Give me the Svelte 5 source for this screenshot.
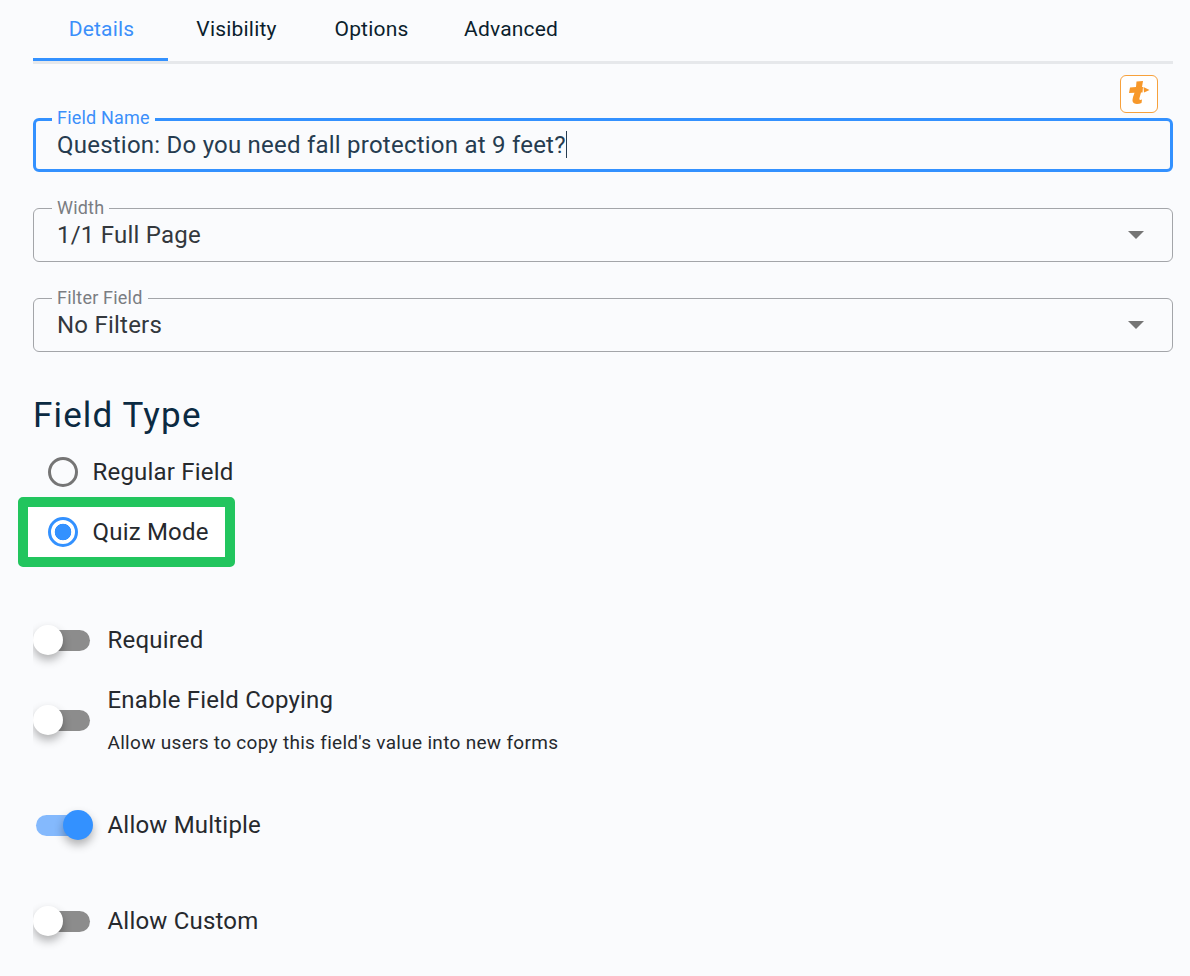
<script>
	const tabs = ['Details', 'Visibility', 'Options', 'Advanced'];
</script>

<div class="page">
	<nav class="tabs">
		{#each tabs as tab, i}
			<div class="tab" class:active={i === 0}>{tab}</div>
		{/each}
	</nav>

	<div class="logo-row">
		<div class="logo">
			<svg viewBox="1 1 36 36" width="36" height="36">
				<path d="M10 12.5 L16 12 L16.5 6.5 L23 6 L22 12 L23 12 L22.5 17.5 L21 17.5 L19.5 23 C19 25 20 25.5 22 24.5 L21.5 28 C18 29.5 13 29.5 12.5 26 C12.3 24 13.5 20.5 14.5 17.8 L9 18 Z" fill="#f7982a" />
				<path d="M23.5 12 L29.5 15 L24 17.5 Z" fill="#f7982a" />
			</svg>
		</div>
	</div>

	<fieldset class="field focused">
		<legend>Field Name</legend>
		<div class="value">Question: Do you need fall protection at 9 feet?<span class="caret"></span></div>
	</fieldset>

	<fieldset class="field">
		<legend>Width</legend>
		<div class="value">1/1 Full Page</div>
		<span class="arrow"></span>
	</fieldset>

	<fieldset class="field">
		<legend>Filter Field</legend>
		<div class="value">No Filters</div>
		<span class="arrow"></span>
	</fieldset>

	<h2>Field Type</h2>

	<div class="radio">
		<span class="dot"></span>
		<span>Regular Field</span>
	</div>
	<div class="highlight">
		<div class="radio">
			<span class="dot on"></span>
			<span>Quiz Mode</span>
		</div>
	</div>

	<div class="switch-row required">
		<span class="switch"><span class="track"></span><span class="thumb"></span></span>
		<span class="label">Required</span>
	</div>

	<div class="switch-row copying">
		<span class="switch"><span class="track"></span><span class="thumb"></span></span>
		<div class="copy-text">
			<div class="label">Enable Field Copying</div>
			<div class="caption">Allow users to copy this field's value into new forms</div>
		</div>
	</div>

	<div class="switch-row multiple">
		<span class="switch on"><span class="track"></span><span class="thumb"></span></span>
		<span class="label">Allow Multiple</span>
	</div>

	<div class="switch-row custom">
		<span class="switch"><span class="track"></span><span class="thumb"></span></span>
		<span class="label">Allow Custom</span>
	</div>
</div>

<style>
	:global(body) {
		background: #fafbfd;
	}

	.page {
		height: 976px;
		box-sizing: border-box;
		padding: 0 17px 0 33px;
		overflow: hidden;
		font-family: Roboto, "Liberation Sans", sans-serif;
		color: #26292d;
	}

	.tabs {
		display: flex;
		height: 64px;
		box-sizing: border-box;
		border-bottom: 3px solid #e6e8eb;
	}

	.tab {
		min-width: 135px;
		height: 61px;
		box-sizing: border-box;
		padding: 15px 24px 0;
		border-bottom: 3px solid transparent;
		text-align: center;
		text-indent: 2px;
		font-size: 21px;
		line-height: 28px;
		letter-spacing: 0.2px;
		color: #0b1e2d;
	}

	.tab.active {
		color: #3b8ffa;
		border-bottom-color: #3391ff;
	}

	.logo-row {
		display: flex;
		justify-content: flex-end;
		height: 38px;
		margin: 11px 15px 0 0;
	}

	.logo {
		width: 38px;
		height: 38px;
		box-sizing: border-box;
		border: 1px solid #f7a13c;
		border-radius: 6px;
		background: #fff;
	}

	.logo svg {
		display: block;
	}

	.field {
		position: relative;
		margin: 0 0 28px;
		padding: 0 23px;
		height: 62px;
		box-sizing: border-box;
		border: 1px solid #a3a5a9;
		border-radius: 6px;
		min-width: 0;
	}

	.field legend {
		padding: 0 5px 2px;
		margin-left: -5px;
		font-size: 18px;
		line-height: 15px;
		letter-spacing: 0.2px;
		color: #7a7d82;
	}

	.value {
		font-size: 24px;
		line-height: 32px;
		letter-spacing: 0.23px;
		color: #33383d;
		margin-top: 2px;
	}

	.field.focused {
		margin-top: -3px;
		border: 3px solid #3391ff;
		padding: 0 21px;
	}

	.field.focused legend {
		line-height: 16px;
		color: #3b8ffa;
	}

	.field.focused .value {
		margin-top: 1px;
		color: #263c50;
	}

	.caret {
		display: inline-block;
		width: 1px;
		height: 27px;
		background: #263c50;
		vertical-align: -5px;
	}

	.arrow {
		position: absolute;
		right: 28px;
		top: 14px;
		border-left: 8px solid transparent;
		border-right: 8px solid transparent;
		border-top: 8px solid #757575;
	}

	h2 {
		margin: 42px 0 0;
		font-size: 35px;
		font-weight: 400;
		line-height: 44px;
		letter-spacing: 1.15px;
		color: #0b2a42;
	}

	.radio {
		display: flex;
		align-items: center;
		gap: 14.5px;
		height: 50px;
		margin-top: 9px;
		padding-left: 15px;
		font-size: 24px;
		letter-spacing: 0.2px;
	}

	.dot {
		width: 30px;
		height: 30px;
		box-sizing: border-box;
		border: 3px solid #757575;
		border-radius: 50%;
	}

	.dot.on {
		border-color: #3391ff;
		background: radial-gradient(circle, #3391ff 0 8px, transparent 8.6px);
	}

	.highlight {
		width: 217px;
		height: 70px;
		box-sizing: border-box;
		margin: 0 0 0 -15px;
		border: 10px solid #22c55e;
		border-radius: 5px;
		background: #fff;
	}

	.highlight .radio {
		margin: 0;
		padding-left: 20px;
	}

	.switch-row {
		display: flex;
		align-items: center;
		gap: 14.5px;
	}

	.required {
		margin-top: 53px;
		height: 40px;
	}

	.copying {
		margin-top: 20px;
		height: 80px;
	}

	.multiple {
		margin-top: 45px;
		height: 40px;
	}

	.custom {
		margin-top: 56px;
		height: 40px;
	}

	.switch {
		position: relative;
		flex: none;
		width: 60px;
		height: 40px;
		clip-path: inset(-30px -30px -30px 0);
	}

	.track {
		position: absolute;
		left: 3px;
		top: 9.5px;
		width: 54px;
		height: 21px;
		border-radius: 11px;
		background: #8c8c8c;
	}

	.thumb {
		position: absolute;
		left: 0;
		top: 5px;
		width: 30px;
		height: 30px;
		border-radius: 50%;
		background: #fff;
		box-shadow: 0 5px 10px rgba(0, 0, 0, 0.3);
	}

	.switch.on .track {
		background: #84b9fd;
	}

	.switch.on .thumb {
		left: 30px;
		background: #3391ff;
	}

	.label {
		font-size: 24px;
		line-height: 32px;
		letter-spacing: 0.2px;
	}

	.copy-text {
		padding-bottom: 1px;
	}

	.caption {
		margin-top: 15px;
		font-size: 19px;
		line-height: 24px;
		letter-spacing: 0.3px;
	}
</style>
